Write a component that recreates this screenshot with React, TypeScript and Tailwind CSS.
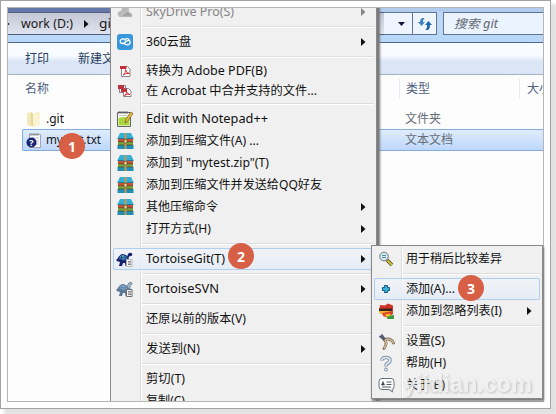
import type { ReactNode } from "react";

const fontUI = "font-['Noto_Sans','Noto_Sans_CJK_SC',sans-serif]";

type Entry = { text?: string; w?: number; icon?: ReactNode; arrow?: boolean; hot?: boolean; dim?: boolean; h?: string; badge?: string; badgeX?: string };

function Label({ text, w, className = "" }: { text: string; w?: number; className?: string }) {
  return (
    <svg className={`shrink-0 overflow-visible ${className}`} width={w ?? 50} height="18" fill="currentColor">
      <text x="0" y="13" fontSize="12" textLength={w} lengthAdjust="spacingAndGlyphs">{text}</text>
    </svg>
  );
}

function Badge({ n, className }: { n: string; className: string }) {
  return (
    <span className={`absolute flex size-[26px] items-center justify-center rounded-full bg-[#d65f45] font-['Open_Sans',sans-serif] text-[14px] font-bold text-white ${className}`}>{n}</span>
  );
}

const Cloud = () => (
  <svg width="16" height="16" viewBox="0 0 16 16"><path d="M1 11Q0 7 4 7Q5 2 9 4Q13 3 12 8Q16 9 15 13H5Q2 14 1 11Z" fill="#b9b9b9" /><path d="M5 12Q5 9 8 9Q11 5 13 9Q16 10 15 13H5Z" fill="#a4a4a4" stroke="#ddd" strokeWidth=".6" /></svg>
);
const Disk360 = () => (
  <svg width="16" height="16" viewBox="0 0 16 16"><rect width="16" height="16" rx="3" fill="#3697dc" /><path d="M12.500 5.500Q9 3.500 8 6Q7 4.500 5 5Q2.500 6 3.500 8.500Q5.500 10.500 8 8.500L10 6.800Q12.500 5.500 13.200 8Q13 11 10 10.800L6.500 9.500" fill="none" stroke="#fff" strokeWidth="1.300" /></svg>
);
const Pdf = ({ multi = false }: { multi?: boolean }) =>
  multi ? (
    <svg width="16" height="16" viewBox="0 0 16 16">
      <path d="M2.500 2.500h6v7h-6z" fill="#fff" stroke="#8b8589" /><path d="M1 2h6v4H1z" fill="#b9323e" />
      <path d="M6.500 5.500h5l2.500 2.500v5.500h-7.500z" fill="#fff" stroke="#8b8589" /><path d="M4 5.500h6v3.500H4z" fill="#c42e3b" />
      <path d="M7.500 12.500Q10 11 9.500 8.500Q10 11 13 11.500Q10 10.800 7.500 12.500" fill="none" stroke="#d53a45" />
    </svg>
  ) : (
    <svg width="16" height="16" viewBox="0 0 16 16">
      <path d="M4.500 3.500h6l2.500 2.500v7.500h-8.500z" fill="#fff" stroke="#8b8589" /><path d="M3 3h6.500v3H3z" fill="#c42e3b" />
      <path d="M6 12Q9 10 8.500 6.500Q9 10 12.500 10.500Q9 9.800 6 12" fill="none" stroke="#d53a45" />
    </svg>
  );
const Notepad = () => (
  <svg width="18" height="18" viewBox="0 0 18 18"><path d="M1.500 2.500h13v14h-13z" fill="#fff" stroke="#666" /><path d="M2.500 8Q8 6 13.500 8V15.500H2.500Z" fill="#a9d63c" /><path d="M3 1v3M5 1v3M7 1v3M9 1v3M11 1v3" stroke="#555" strokeWidth=".8" /><path d="M3 5.500h8" stroke="#c4c4c4" /><path d="M9.500 10L14.500 2L17 3.500L11.500 11.500L9 13Z" fill="#eabc36" stroke="#6b562d" strokeWidth=".7" /></svg>
);
const Archive = () => (
  <svg width="17" height="16" viewBox="0 0 17 16"><path d="M3 0h11l2.500 5H.5z" fill="#36afd5" /><path d="M.5 5h16v1h-16z" fill="#23799b" /><path d="M1 6h15v3H1z" fill="#ca5236" /><path d="M1 9h15v3H1z" fill="#77a63b" /><path d="M.5 12h16v4H.5z" fill="#218eb4" /><path d="M1 8.800h15M1 12h15" stroke="#54402c" strokeWidth=".7" /><path d="M7.500 0h2v16h-2z" fill="#b99a58" /><path d="M7 6.500h3v3.500H7z" fill="#ead293" stroke="#6b5028" strokeWidth=".7" /></svg>
);
const Turtle = ({ svn = false }: { svn?: boolean }) => {
  const edge = svn ? "#5b7795" : "#16206e";
  return (
    <svg width="18" height="17" viewBox="0 0 18 17">
      {svn ? (
        <path d="M12 8q-1-3 0-5q2-3 4-1q0 2-2 2l0 4z" fill="#a9bccb" stroke={edge} strokeWidth=".8" />
      ) : (
        <path d="M11 6l1-3q2-2 4-.5q1 2-1 2.500l-2 .5-1 3z" fill={edge} />
      )}
      <path d="M.5 8.500L3 6h9l1 4-1 2v3H9.500l-.5-3H7l-1 3H3l1-4-3.500-1z" fill={edge} />
      <path d="M2.500 8Q3 3.500 7.500 3.500Q11.500 4 12 8.500Q7 10.500 2.500 8Z" fill={svn ? "#7ca5c8" : "#4d9fb8"} stroke={edge} />
      <path d="M5.500 5v4M9 4.500v4.500M3 6.800h8" stroke={edge} strokeWidth=".6" />
      <path d="M10.500 8.500h5.500v7h-5.500z" fill="#f5f5f5" stroke={svn ? "#6b6b6b" : "#b5b5b5"} /><path d="M12 10.500h3M12 12h3M12 13.500h3" stroke="#666" strokeWidth=".8" />
    </svg>
  );
};
const Magnifier = () => (
  <svg width="16" height="16" viewBox="0 0 16 16"><path d="M9 9l5 5" stroke="#575028" strokeWidth="3.500" /><path d="M9.500 9.500l4.500 4.500" stroke="#d4c23d" strokeWidth="1.800" /><circle cx="6" cy="5.500" r="4.300" fill="#d5e8ee" stroke="#6b757d" /><path d="M4 4.500h4M4 6.500h4" stroke="#5c8ba0" /></svg>
);
const Plus = () => (
  <svg width="10" height="10" viewBox="0 0 10 10"><path d="M3.500 1.500h3v2h2v3h-2v2h-3v-2h-2v-3h2z" fill="#35b2d6" stroke="#17598a" /></svg>
);
const Ignore = () => (
  <svg width="17" height="17" viewBox="0 0 17 17"><path d="M2 2l5 .5 3-2 5 2v6H1z" fill="#cf3429" /><path d="M1 5.500h13v2.500H1z" fill="#40231f" /><path d="M1 8h10v3H2z" fill="#f0b52c" /><path d="M4 10l11-2v3l-5 4-5-2z" fill="#dd4127" /><path d="M7 11.500l5-1 1 3-4 1z" fill="#f5c332" /><path d="M10 13l6-1v4H9z" fill="#3c9941" /></svg>
);
const Pliers = () => (
  <svg width="17" height="17" viewBox="0 0 17 17" fill="none"><path d="M6 6.500Q13 4.500 15.500 10M6.500 7Q10 10 6 15.500" stroke="#7c6a52" strokeWidth="2.800" strokeLinecap="round" /><path d="M7 6.500Q13 5 15.300 9.800M7 7.500Q10 10 6.200 15" stroke="#dcc49c" strokeWidth="1.300" strokeLinecap="round" /><path d="M1.500 3l5 4M3.500 1.500l3.500 5" stroke="#535a70" strokeWidth="2" /></svg>
);
const Help = () => (
  <svg width="14" height="17" viewBox="0 0 14 17" fill="none"><path d="M3 5.500Q3 2.500 7 2.500T11 5.500Q11 7.500 8 8.500Q7 9.500 7 11.500" stroke="#8293aa" strokeWidth="3.600" /><path d="M3 5Q3 2.500 7 2.500T11 5.500Q11 7.500 8 8.500Q7 9.500 7 11" stroke="#e3ebf2" strokeWidth="1.700" /><circle cx="7" cy="14.500" r="1.500" fill="#e3ebf2" stroke="#8293aa" /></svg>
);
const About = () => (
  <svg width="17" height="16" viewBox="0 0 17 16"><path d="M4 1.500h9q3 0 3 3v5q0 3-2 3l.5 2.500-3.500-2.500H4q-3 0-3-3v-5q0-3 3-3z" fill="#fff" stroke="#69717a" /><path d="M3.500 8L5 4.500l1.500 3.500z" fill="#39424c" stroke="#39424c" strokeWidth=".6" /><path d="M8.500 5h5M8.500 7.500h5M4 10h9" stroke="#555d66" /></svg>
);
const Arrow = ({ dim = false }: { dim?: boolean }) => (
  <svg width="5" height="8" viewBox="0 0 5 8"><path d="M0 0l4.500 4L0 8z" fill={dim ? "#858585" : "#101010"} /></svg>
);

const main: Entry[] = [
  { text: "SkyDrive Pro(S)", w: 88, icon: <Cloud />, arrow: true, dim: true }, {},
  { text: "360云盘", w: 45, icon: <Disk360 />, arrow: true }, {},
  { text: "转换为 Adobe PDF(B)", w: 121, icon: <Pdf />, h: "h-5" },
  { text: "在 Acrobat 中合并支持的文件...", w: 171, icon: <Pdf multi />, h: "h-[19px]" }, {},
  { text: "Edit with Notepad++", w: 122, icon: <Notepad /> },
  { text: "添加到压缩文件(A) ...", w: 113, icon: <Archive /> },
  { text: "添加到 \"mytest.zip\"(T)", w: 123, icon: <Archive /> },
  { text: "添加到压缩文件并发送给QQ好友", w: 176, icon: <Archive /> },
  { text: "其他压缩命令", w: 72, icon: <Archive />, arrow: true },
  { text: "打开方式(H)", w: 65, arrow: true }, {},
  { text: "TortoiseGit(T)", w: 79, icon: <Turtle />, arrow: true, hot: true, badge: "2", badgeX: "left-[115px] -top-[5px]" }, {},
  { text: "TortoiseSVN", w: 73, icon: <Turtle svn />, arrow: true }, {},
  { text: "还原以前的版本(V)", w: 100 }, {},
  { text: "发送到(N)", w: 54, arrow: true }, {},
  { text: "剪切(T)", w: 39 },
  { text: "复制(C)", w: 39 },
];
const sub: Entry[] = [
  { text: "用于稍后比较差异", w: 96, icon: <Magnifier /> }, {},
  { text: "添加(A)...", w: 49, icon: <Plus />, hot: true, badge: "3", badgeX: "left-[84px] -top-[3px]" },
  { text: "添加到忽略列表(I)", w: 96, icon: <Ignore />, arrow: true }, {},
  { text: "设置(S)", w: 39, icon: <Pliers /> },
  { text: "帮助(H)", w: 40, icon: <Help /> },
  { text: "关于(B)", w: 39, icon: <About /> },
];

function Menu({ items, indent = "ml-[9px]" }: { items: Entry[]; indent?: string }) {
  return (
    <>
      {items.map((it, i) =>
        it.text ? (
          <div key={i} className={`relative mx-[2px] flex shrink-0 items-center ${it.h ?? "h-[22px]"} ${it.hot ? "rounded-[2px] bg-linear-to-b from-[#f1f4f9]/80 to-[#e2ebf6]/80 shadow-[inset_0_0_0_1px_#aecff0]" : ""} ${it.dim ? "text-[#858585]" : "text-[#111]"}`}>
            <span className="flex w-[24px] shrink-0 justify-center">{it.icon}</span>
            <Label text={it.text} w={it.w} className={indent} />
            {it.arrow && <span className="mr-[8px] ml-auto"><Arrow dim={it.dim} /></span>}
            {it.badge && <Badge n={it.badge} className={it.badgeX ?? ""} />}
          </div>
        ) : (
          <div key={i} className="ml-[31px] mr-[2px] flex h-2 shrink-0 flex-col justify-center"><div className="h-[2px] border-t border-[#dedede] bg-white" /></div>
        )
      )}
    </>
  );
}

export default function App() {
  return (
    <div className={`h-[414px] w-[556px] overflow-hidden bg-white text-[12px] ${fontUI}`}>
      <div className="relative h-[409px] w-[551px] border border-[#a2a2a2] bg-white p-[6px] shadow-[5px_5px_3px_1px_#e2e2e2]">
        <div className="relative flex h-[395px] w-[537px] flex-col overflow-hidden border border-[#b5b5b5] bg-[#fdfdfd]">
          <div className="flex h-[4px] shrink-0"><div className="w-[110px] bg-[#6478a9]" /><div className="flex-1 bg-[#b3cbed]" /></div>
          <div className="flex h-[23px] shrink-0 bg-[#bed7f5]">
            <div className="flex w-[376px] items-center border-y border-[#52607e] bg-linear-to-b from-[#c4c8d6] to-[#dfe3ee] text-[#171717]">
              <span className="-ml-[3px]"><Arrow /></span>
              <Label text="work (D:)" w={52} className="ml-[11px]" />
              <span className="ml-[11px]"><Arrow /></span>
              <Label text="git" w={17} className="ml-[10px]" />
            </div>
            <div className="flex w-[28px] items-center justify-center border-y border-[#5e7598] bg-[#eef5fe] pl-[6px]"><svg width="7" height="4"><path d="M0 0h7L3.500 4z" fill="#14143c" /></svg></div>
            <div className="flex w-[25px] items-center justify-center border border-[#5e7598] bg-[#eef5fe]">
              <svg width="14" height="14" viewBox="0 0 14 14"><path d="M0 5l3.500 4L7 5H5V3.500L6.500 1H4Q2 2 2 5z" fill="#3c82c6" /><path d="M14 8l-3.500-4L7 8h2v2.500L7.500 13H10q2-1 2-5z" fill="#2367ad" /></svg>
            </div>
            <div className="ml-[6px] flex flex-1 items-center border border-r-0 border-[#5e7598] bg-[#eaf3fe] pl-[10px] text-[#5d6670] italic"><Label text="搜索 git" w={44} /></div>
          </div>
          <div className="h-[7px] shrink-0 bg-[#b9d7f7]" />
          <div className="flex h-[33px] shrink-0 items-center gap-[29px] border-y border-t-[#50698f] border-b-[#a5b3c9] bg-linear-to-b from-[#f8fbff] from-40% to-[#dae6f6] to-60% pl-[17px] text-[#2a3d60]"><Label text="打印" w={24} /><Label text="新建文件夹" w={60} /></div>
          <div className="flex h-[27px] shrink-0 items-center text-[#50617f]">
            <Label text="名称" w={24} className="ml-[17px]" />
            <div className="ml-[350px] flex h-[20px] w-[120px] shrink-0 items-center border-l border-[#e6e9ef] pl-[6px]"><Label text="类型" w={24} /></div>
            <div className="flex h-[20px] shrink-0 items-center border-l border-[#e6e9ef] pl-[7px]"><Label text="大小" w={24} /></div>
          </div>
          <div className="mt-[6px] ml-[14px] flex h-[21px] shrink-0 items-center">
            <svg className="ml-[4px]" width="15" height="16"><path d="M1 2l4-1 2 2 5-2 2 1v12l-7 2-6-2z" fill="#f2e9b8" /><path d="M7 3l7-1v12l-7 2z" fill="#f9f3d2" /><path d="M5 1v12l2 2V3" fill="#e4d79c" /></svg>
            <Label text=".git" w={18} className="ml-[5px] text-[#151515]" /><Label text="文件夹" w={36} className="ml-[341px] text-[#666d75]" />
          </div>
          <div className="ml-[14px] flex h-[22px] shrink-0 items-center rounded-l-[2px] border border-r-0 border-[#84acdd] bg-linear-to-b from-[#dfecfd] to-[#bdd7fb]">
            <svg className="ml-[3px]" width="16" height="17"><path d="M3.500 2.500h11v13h-11z" fill="#fff" stroke="#a2a7af" /><path d="M4 1v3M6 1v3M8 1v3M10 1v3M12 1v3" stroke="#777" strokeWidth=".7" /><path d="M6 6h7M7 9h6M8 12h5" stroke="#b7c4d5" /><circle cx="5.500" cy="10.500" r="5" fill="#17246f" /><text x="3.300" y="14" fontSize="9" fontWeight="700" fill="#fff">?</text></svg>
            <Label text="mytest.txt" w={55} className="ml-[4px] text-[#151515]" /><Label text="文本文档" w={48} className="ml-[304px] text-[#666d75]" />
          </div>
          <Badge n="1" className="top-[125px] left-[51px]" />
          <div className="absolute top-[-8px] left-[102px] flex h-[430px] w-[267px] flex-col border-x border-[#8c8c8c] bg-[#f0f0f0] bg-[linear-gradient(90deg,transparent_29px,#dddddd_29px,#dddddd_30px,#ffffff_30px,#ffffff_31px,transparent_31px)] pt-[1px] shadow-[3px_2px_2px_#777]"><Menu items={main} /></div>
        </div>
        <div className="absolute top-[244px] left-[370px] flex h-[154px] w-[172px] flex-col border border-[#888] bg-[#f0f0f0] bg-[linear-gradient(90deg,transparent_29px,#dddddd_29px,#dddddd_30px,#ffffff_30px,#ffffff_31px,transparent_31px)] pt-[2px] shadow-[1px_2px_2px_#777]"><Menu items={sub} indent="ml-[8px]" />
          <svg className="absolute top-[122px] left-[31px] overflow-visible font-['Liberation_Sans',sans-serif] drop-shadow-[1px_1px_1px_#b4b4b4]" width="130" height="30">
            <text x="0" y="24" fontSize="23" fontWeight="700" fill="#f8f8f8" fillOpacity=".8" textLength="129" lengthAdjust="spacingAndGlyphs">yiidian.com</text>
          </svg>
        </div>
      </div>
    </div>
  );
}
